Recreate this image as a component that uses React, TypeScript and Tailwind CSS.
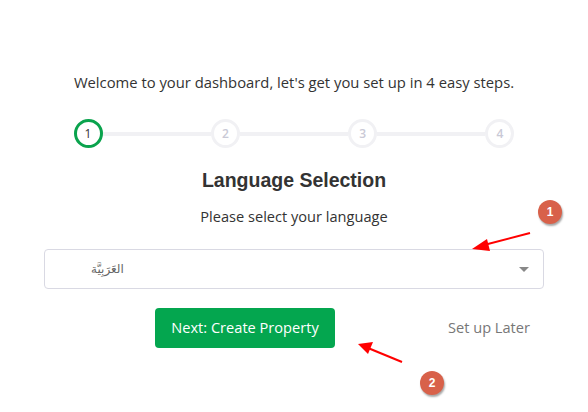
import React from 'react';

const steps = [1, 2, 3, 4];

function Badge({ n, className }: { n: number; className: string }) {
  return (
    <div
      className={`absolute w-[24px] h-[24px] rounded-full bg-[#d8614a] text-white text-[12px] font-bold flex items-center justify-center shadow-[1px_2px_2px_rgba(0,0,0,0.35)] ${className}`}
      style={{ fontFamily: 'Arial, sans-serif' }}
    >
      {n}
    </div>
  );
}

export default function App() {
  return (
    <div
      className="relative w-[588px] h-[412px] bg-white overflow-hidden text-[#333]"
      style={{ fontFamily: '"Open Sans", sans-serif' }}
    >
      <div className="flex flex-col items-center pt-[72px]">
        <p className="text-[14.8px] leading-[20px] text-[#333]">
          Welcome to your dashboard, let's get you set up in 4 easy steps.
        </p>

        <div className="mt-[27px] flex items-center w-[441px]">
          {steps.map((s, i) => (
            <React.Fragment key={s}>
              {i > 0 && <div className="flex-1 h-[4px] bg-[#f1f1f4]" />}
              <div
                className={
                  s === 1
                    ? 'w-[29px] h-[29px] rounded-full border-[3px] border-[#0aa34d] flex items-center justify-center text-[12px] text-[#333]'
                    : 'w-[29px] h-[29px] rounded-full border-[3px] border-[#f1f1f4] flex items-center justify-center text-[12px] font-semibold text-[#c9c9d6]'
                }
              >
                {s}
              </div>
            </React.Fragment>
          ))}
        </div>

        <h2
          className="mt-[21px] text-[19.5px] leading-[22px] font-bold text-[#333]"
          style={{ fontFamily: '"Liberation Sans", Arial, sans-serif' }}
        >
          Language Selection
        </h2>
        <p className="mt-[15px] text-[14.6px] leading-[20px] text-[#333]">Please select your language</p>

        <div className="mt-[23px] w-[500px] h-[40px] rounded-[4px] border border-[#d9d9e3] flex items-center justify-between pl-[46px] pr-[14px]">
          <span
            className="text-[12px] text-[#666]"
            style={{ fontFamily: '"DejaVu Sans", sans-serif' }}
            dir="rtl"
          >
            العَرَبِيَّة
          </span>
          <span className="w-0 h-0 border-l-[5px] border-r-[5px] border-t-[5px] border-l-transparent border-r-transparent border-t-[#888]" />
        </div>

        <div className="mt-[19px] w-[500px] flex items-center pl-[111px]">
          <button className="w-[180px] h-[40px] rounded-[4px] bg-[#04a64f] text-white text-[14.6px]">
            Next: Create Property
          </button>
          <span className="ml-[113px] text-[14.6px] text-[#777]">Set up Later</span>
        </div>
      </div>

      <svg className="absolute left-0 top-0" width="588" height="412" viewBox="0 0 588 412">
        <line x1="530" y1="233" x2="484" y2="245" stroke="#f00" strokeWidth="2" />
        <polygon points="472,249 487,239 490,251" fill="#f00" />
        <line x1="402" y1="362" x2="368" y2="348" stroke="#f00" strokeWidth="2" />
        <polygon points="358,344 373,342 368,354" fill="#f00" />
      </svg>

      <Badge n={1} className="left-[538px] top-[200px]" />
      <Badge n={2} className="left-[420px] top-[371px]" />
    </div>
  );
}
